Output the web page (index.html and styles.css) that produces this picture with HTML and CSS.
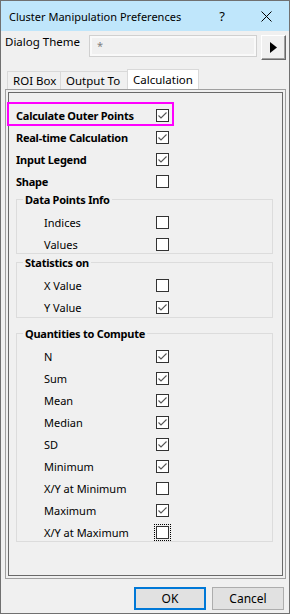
FILE: index.html
```html
<!DOCTYPE html>
<html lang="en">
<head>
    <meta charset="UTF-8">
    <meta name="viewport" content="width=device-width, initial-scale=1.0">
    <title>Cluster Manipulation Preferences</title>
    <link rel="stylesheet" href="styles.css">
</head>
<body>

    <div class="window">
        <div class="titlebar">
            <span class="title">Cluster Manipulation Preferences</span>
            <span class="help">?</span>
            <span class="close">
                <svg width="11" height="11" viewBox="0 0 11 11"><path d="M0.5 0.5 L10.5 10.5 M10.5 0.5 L0.5 10.5" stroke="#000" stroke-width="1" fill="none"/></svg>
            </span>
        </div>

        <div class="theme-row">
            <span class="theme-label">Dialog Theme</span>
            <div class="theme-box">*</div>
            <div class="theme-btn">
                <svg width="7" height="11" viewBox="0 0 7 11"><path d="M0 0 L7 5.5 L0 11 Z" fill="#000"/></svg>
            </div>
        </div>

        <div class="tabs">
            <span class="tab tab-roi">ROI Box</span>
            <span class="tab tab-output">Output To</span>
            <span class="tab tab-calc active">Calculation</span>
        </div>

        <div class="panel">
            <div class="page">
                <div class="rows">
                    <div class="row"><span class="label bold">Calculate Outer Points</span><span class="cb on"></span></div>
                    <div class="row"><span class="label bold">Real-time Calculation</span><span class="cb on"></span></div>
                    <div class="row"><span class="label bold">Input Legend</span><span class="cb on"></span></div>
                    <div class="row"><span class="label bold">Shape</span><span class="cb"></span></div>
                </div>

                <fieldset class="group group-first">
                    <legend>Data Points Info</legend>
                    <div class="rows">
                        <div class="row"><span class="label">Indices</span><span class="cb"></span></div>
                        <div class="row"><span class="label">Values</span><span class="cb"></span></div>
                    </div>
                </fieldset>

                <fieldset class="group group-stats">
                    <legend>Statistics on</legend>
                    <div class="rows">
                        <div class="row"><span class="label">X Value</span><span class="cb"></span></div>
                        <div class="row"><span class="label">Y Value</span><span class="cb on"></span></div>
                    </div>
                </fieldset>

                <fieldset class="group group-qty">
                    <legend>Quantities to Compute</legend>
                    <div class="rows">
                        <div class="row"><span class="label">N</span><span class="cb on"></span></div>
                        <div class="row"><span class="label">Sum</span><span class="cb on"></span></div>
                        <div class="row"><span class="label">Mean</span><span class="cb on"></span></div>
                        <div class="row"><span class="label">Median</span><span class="cb on"></span></div>
                        <div class="row"><span class="label">SD</span><span class="cb on"></span></div>
                        <div class="row"><span class="label">Minimum</span><span class="cb on"></span></div>
                        <div class="row"><span class="label">X/Y at Minimum</span><span class="cb"></span></div>
                        <div class="row"><span class="label">Maximum</span><span class="cb on"></span></div>
                        <div class="row"><span class="label">X/Y at Maximum</span><span class="cb focus"></span></div>
                    </div>
                </fieldset>
            </div>
        </div>

        <div class="buttons">
            <button class="btn default">OK</button>
            <button class="btn">Cancel</button>
        </div>

        <div class="highlight"></div>
    </div>

    <script>
        var checkSvg = '<svg width="11" height="11" viewBox="0 0 11 11"><path d="M1.5 5.5 L4 8 L9.5 2.5" stroke="#555" stroke-width="1.1" fill="none"/></svg>';
        var boxes = document.querySelectorAll('.cb.on');
        for (var i = 0; i < boxes.length; i++) {
            boxes[i].innerHTML = checkSvg;
        }
    </script>

</body>
</html>
```

FILE: styles.css
```css
body {
    margin: 0;
    font-family: "Noto Sans", "Liberation Sans", sans-serif;
    font-size: 11px;
    color: #000;
    background-color: #f0f0f0;
}
.window {
    position: relative;
    width: 290px;
    height: 614px;
    box-sizing: border-box;
    border: 1px solid #707070;
    background-color: #f0f0f0;
}
.titlebar {
    display: flex;
    align-items: center;
    height: 30px;
    padding: 0 11px 0 8px;
    background-color: #bfe6fb;
    font-size: 11px;
}
.help {
    margin-left: auto;
    width: 12px;
    text-align: center;
    font-size: 13px;
}
.close {
    display: flex;
    justify-content: center;
    width: 24px;
    margin-left: 26px;
}
.theme-row {
    display: flex;
    height: 25px;
    margin-top: 4px;
    padding-left: 4px;
}
.theme-label {
    width: 84px;
    line-height: 16px;
    margin-top: -1px;
    font-size: 11.5px;
}
.theme-box {
    width: 168px;
    height: 22px;
    box-sizing: border-box;
    padding-left: 7px;
    border: 1px solid #d0d0d0;
    box-shadow: inset 0 0 0 2px #f9f9f9;
    color: #808080;
    line-height: 20px;
}
.theme-btn {
    display: flex;
    align-items: center;
    justify-content: center;
    width: 25px;
    height: 25px;
    box-sizing: border-box;
    margin-left: 4px;
    border: 1px solid;
    border-color: #fff #696969 #696969 #fff;
    box-shadow: inset -1px -1px 0 #a0a0a0;
    background-color: #f0f0f0;
}
.tabs {
    display: flex;
    align-items: flex-end;
    height: 20px;
    margin-top: 9px;
    padding-left: 6px;
}
.tab {
    height: 18px;
    box-sizing: border-box;
    padding-left: 5px;
    border: 1px solid #d9d9d9;
    border-bottom: none;
    border-right: none;
    line-height: 17px;
    font-size: 11.5px;
}
.tab-roi {
    width: 53px;
}
.tab-output {
    width: 67px;
}
.tab-calc {
    width: 72px;
    border-right: 1px solid #d9d9d9;
}
.tab.active {
    height: 20px;
    padding-top: 1px;
    background-color: #fff;
}
.panel {
    height: 490px;
    box-sizing: border-box;
    margin: 0 3px 0 4px;
    padding: 2px;
    border: 1px solid #a0a0a0;
}
.page {
    display: flex;
    flex-direction: column;
    align-items: flex-start;
    height: 100%;
    box-sizing: border-box;
    padding: 14px 0 0 7px;
    border: 1px solid #696969;
}
.rows {
    display: flex;
    flex-direction: column;
    gap: 6px;
}
.row {
    display: flex;
    align-items: center;
    height: 16px;
}
.label {
    width: 140px;
    line-height: 16px;
    white-space: nowrap;
    padding-top: 2px;
}
.bold {
    font-weight: bold;
    letter-spacing: -0.25px;
}
.cb {
    display: flex;
    flex-shrink: 0;
    width: 13px;
    height: 13px;
    box-sizing: border-box;
    border: 1px solid #333;
    background-color: #fff;
}
.cb.focus {
    outline: 1px dotted #000;
    outline-offset: 1px;
}
.group {
    width: 257px;
    box-sizing: border-box;
    margin: 3px 0 0 0;
    padding: 7px 0 1px 0;
    border: 1px solid #dcdcdc;
}
.group legend {
    margin-left: 6px;
    padding: 0 2px;
    font-weight: bold;
    letter-spacing: -0.25px;
    line-height: 15px;
}
.group .row {
    padding-left: 27px;
}
.group .label {
    width: 112px;
}
.group-stats {
    margin-top: 1px;
    padding-bottom: 2px;
}
.group-qty {
    margin-top: 8px;
}
.buttons {
    display: flex;
    justify-content: flex-end;
    gap: 6px;
    margin-top: 8px;
    padding-right: 5px;
}
.btn {
    width: 72px;
    height: 23px;
    box-sizing: border-box;
    border: 1px solid #adadad;
    background-color: #e1e1e1;
    font-family: inherit;
    font-size: 12px;
    color: #000;
    padding: 0;
}
.btn.default {
    border: 2px solid #0078d7;
}
.highlight {
    position: absolute;
    left: 6px;
    top: 101px;
    width: 167px;
    height: 24px;
    box-sizing: border-box;
    border: 2px solid #ff00ff;
}
```
